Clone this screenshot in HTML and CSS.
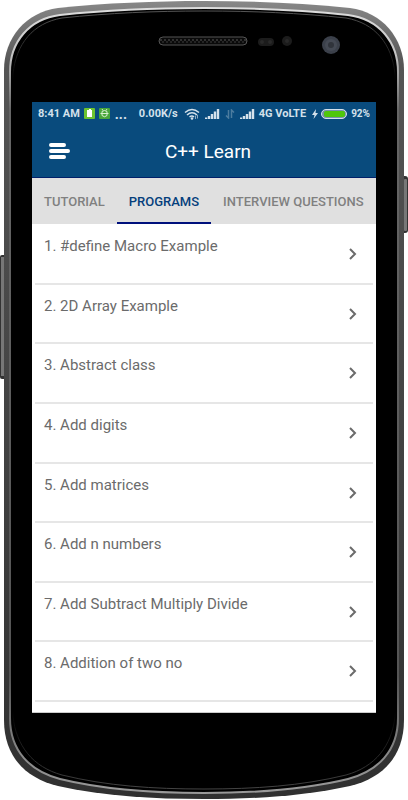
FILE: index.html
```
<!DOCTYPE html>
<html lang="en">
<head>
<meta charset="utf-8">
<meta name="viewport" content="width=device-width, initial-scale=1">
<title>C++ Learn</title>
<link rel="stylesheet" href="styles.css">
</head>
<body>
<div class="phone">
  <svg class="frame" viewBox="0 0 408 800" preserveAspectRatio="none" aria-hidden="true">
    <defs>
      <linearGradient id="metal" x1="0" y1="0" x2="0" y2="1">
        <stop offset="0" stop-color="#888"/><stop offset=".08" stop-color="#555"/><stop offset="1" stop-color="#303030"/>
      </linearGradient>
      <linearGradient id="shine" x1="0" y1="0" x2="0" y2="1">
        <stop offset="0" stop-color="#ddd"/><stop offset=".06" stop-color="#c4c4c4"/><stop offset=".13" stop-color="#666"/><stop offset=".85" stop-color="#555"/><stop offset=".95" stop-color="#888"/><stop offset="1" stop-color="#999"/>
      </linearGradient>
      <linearGradient id="rim" x1="0" y1="0" x2="0" y2="1">
        <stop offset="0" stop-color="#555"/><stop offset=".09" stop-color="#000"/><stop offset=".9" stop-color="#000"/><stop offset="1" stop-color="#444"/>
      </linearGradient>
      <pattern id="mesh" width="4" height="6" patternUnits="userSpaceOnUse" y="38">
        <rect width="4" height="6" fill="#0a0a0a"/><circle cx="1" cy="2" r="1" fill="#3c3c3c"/><circle cx="3" cy="4" r="1" fill="#2c2c2c"/>
      </pattern>
    </defs>
    <rect x="0" y="255" width="6" height="124" rx="2" fill="#333"/>
    <rect x="1" y="257" width="3" height="119" fill="#777"/>
    <rect x="401" y="176" width="7" height="57" rx="3" fill="#333"/>
    <rect x="404" y="179" width="3" height="52" rx="1" fill="#777"/>
    <path fill="url(#metal)" d="M4 70C4 38 26 12 58 8C105 3 155 1 204 1S303 3 350 8C382 12 404 38 404 70V720C404 756 383 778 350 786C305 796 255 799 204 799S103 796 58 786C25 778 4 756 4 720Z"/>
    <path fill="#000" stroke="url(#shine)" stroke-width="2" d="M10 72C10 42 29 19 60 15C107 10 155 8 204 8S301 10 348 15C379 19 398 42 398 72V718C398 751 378 771 348 779C303 790 255 793 204 793S105 790 60 779C30 771 10 751 10 718Z"/>
    <path fill="none" stroke="url(#rim)" d="M13 74C16 44 33 23 62 18C109 13 155 11 204 11S299 13 346 18C375 23 392 44 395 74V716C392 746 375 767 346 775C301 786 255 789 204 789S107 786 62 775C33 767 16 746 13 716Z"/>
    <rect x="159" y="37" width="88" height="8" rx="4" fill="url(#mesh)" stroke="#555"/>
    <rect x="258" y="38" width="16" height="8" rx="4" fill="#1c1c1c"/>
    <circle cx="262" cy="42" r="2" fill="#292929"/><circle cx="270" cy="42" r="2" fill="#292929"/>
    <circle cx="287" cy="41" r="5" fill="#1c1c1c"/><circle cx="287" cy="41" r="2" fill="#292929"/>
    <circle cx="331" cy="45" r="9" fill="#3b404a"/><circle cx="331" cy="45" r="6" fill="#454a54"/><circle cx="331" cy="45" r="3" fill="#30343b"/>
  </svg>

  <div class="screen">
    <div class="status">
      <span>8:41 AM</span>
      <svg class="app-icon" viewBox="0 0 11 11" aria-hidden="true"><rect width="11" height="11" rx="1" fill="#6cc32f"/><path d="M4 2h1V1h2v1h1v7H3V2z" fill="#fff"/></svg>
      <svg class="app-icon" viewBox="0 0 11 11" aria-hidden="true"><rect width="11" height="11" rx="1" fill="#48a63a"/><path d="M1.500 5.500h8M3 5V3.500Q5.500 1.500 8 3.500V5M3 6v1.500Q5.500 10 8 7.500V6M3 1l1 1.500M8 1l-1 1.500" fill="none" stroke="#d8f0d0"/></svg>
      <span class="more">...</span>
      <span class="speed">0.00K/s</span>
      <svg class="wifi" viewBox="0 0 16 12" aria-hidden="true"><path d="M1 4.500Q8-1.500 15 4.500M3 7Q8 2.500 13 7M5.500 9Q8 7 10 9" fill="none" stroke="#d4e1eb" stroke-width="1.500"/><circle cx="8" cy="10.500" r="1.300" fill="#d4e1eb"/><path d="M11.500 11V7.500M13.500 7v3.500" stroke="#8daac2"/></svg>
      <svg class="signal" viewBox="0 0 15 11" aria-hidden="true"><path d="M1 11V9.500M4 11V8M7 11V6M10 11V3.500M13 11V1" stroke="#d4e1eb" stroke-width="2.400"/></svg>
      <svg class="data" viewBox="0 0 10 10" aria-hidden="true"><path d="M3.500 1v8L1 6.500M6.500 9V1L9 3.500" fill="none" stroke="#4c7c9f" stroke-width="1.500"/></svg>
      <svg class="signal" viewBox="0 0 15 11" aria-hidden="true"><path d="M1 11V9.500M4 11V8M7 11V6M10 11V3.500M13 11V1" stroke="#d4e1eb" stroke-width="2.400"/></svg>
      <span class="network">4G VoLTE</span>
      <svg class="bolt" viewBox="0 0 6 10" aria-hidden="true"><path d="M4 0L0 6h2.500L1.500 10L6 4H3.500z" fill="#d4e1eb"/></svg>
      <svg class="battery" viewBox="0 0 26 10" aria-hidden="true"><rect x=".5" y=".5" width="25" height="9" rx="4.500" fill="#7892ad" stroke="#d4e1eb"/><rect x="3" y="2" width="21" height="6" rx="2" fill="#4fc70b"/></svg>
      <span class="percent">92%</span>
    </div>
    <header class="bar">
      <button class="menu" type="button" aria-label="Menu"><svg viewBox="0 0 22 18" aria-hidden="true"><path d="M3 3h13M3 9h17M3 15h13" stroke="#fff" stroke-width="4" stroke-linecap="round"/></svg></button>
      <h1>C++ Learn</h1>
    </header>
    <nav class="tabs">
      <a href="#tutorial">TUTORIAL</a>
      <a class="active" href="#programs" aria-current="page">PROGRAMS</a>
      <a href="#interview">INTERVIEW QUESTIONS</a>
    </nav>
    <ul class="list">
      <li><a href="#p1">1. #define Macro Example<svg viewBox="0 0 8 12" aria-hidden="true"><path d="M1 1l5 5-5 5"/></svg></a></li>
      <li><a href="#p2">2. 2D Array Example<svg viewBox="0 0 8 12" aria-hidden="true"><path d="M1 1l5 5-5 5"/></svg></a></li>
      <li><a href="#p3">3. Abstract class<svg viewBox="0 0 8 12" aria-hidden="true"><path d="M1 1l5 5-5 5"/></svg></a></li>
      <li><a href="#p4">4. Add digits<svg viewBox="0 0 8 12" aria-hidden="true"><path d="M1 1l5 5-5 5"/></svg></a></li>
      <li><a href="#p5">5. Add matrices<svg viewBox="0 0 8 12" aria-hidden="true"><path d="M1 1l5 5-5 5"/></svg></a></li>
      <li><a href="#p6">6. Add n numbers<svg viewBox="0 0 8 12" aria-hidden="true"><path d="M1 1l5 5-5 5"/></svg></a></li>
      <li><a href="#p7">7. Add Subtract Multiply Divide<svg viewBox="0 0 8 12" aria-hidden="true"><path d="M1 1l5 5-5 5"/></svg></a></li>
      <li><a href="#p8">8. Addition of two no<svg viewBox="0 0 8 12" aria-hidden="true"><path d="M1 1l5 5-5 5"/></svg></a></li>
    </ul>
  </div>
</div>
</body>
</html>
```
FILE: styles.css
```
* { box-sizing: border-box; }
body { margin: 0; background: #fff; font-family: Roboto, sans-serif; }
a { color: inherit; text-decoration: none; }
svg { display: block; flex: none; }

.phone {
  position: relative;
  display: flex;
  flex-direction: column;
  min-height: 100vh;
  padding: 102px 32px 87px;
}
.frame { position: absolute; inset: 0; width: 100%; height: 100%; }
.screen {
  position: relative;
  flex: 1;
  display: flex;
  flex-direction: column;
  background: #fff;
}

.status {
  display: flex;
  align-items: center;
  height: 23px;
  padding: 0 6px;
  background: #094b7d;
  color: #d4e1eb;
  font-size: 11px;
  font-weight: 700;
  white-space: nowrap;
}
.app-icon { width: 11px; height: 11px; margin-left: 4px; }
.more { margin-left: 5px; font-size: 14px; }
.speed { margin-left: auto; }
.wifi { width: 16px; height: 12px; margin-left: 6px; }
.signal { width: 15px; height: 11px; margin-left: 5px; }
.data { width: 10px; height: 10px; margin-left: 5px; }
.network { margin-left: 4px; }
.bolt { width: 6px; height: 10px; margin-left: 6px; }
.battery { width: 26px; height: 10px; margin-left: 3px; }
.percent { margin-left: 4px; font-size: 10px; }

.bar {
  display: grid;
  grid-template-columns: 48px 1fr 40px;
  align-items: center;
  height: 53px;
  background: #094b7d;
  border-bottom: 1px solid #00206a;
  color: #fff;
}
.menu { padding: 0 0 0 16px; border: 0; background: none; }
.menu svg { width: 22px; height: 18px; }
.bar h1 { margin: 0; font-size: 19px; font-weight: 400; text-align: center; }

.tabs {
  display: flex;
  height: 46px;
  background: #e0e0e0;
  color: #808080;
  font-size: 13px;
  font-weight: 500;
  line-height: 48px;
  white-space: nowrap;
}
.tabs a { padding: 0 12px; }
.tabs .active { color: #053f7c; border-bottom: 2px solid #00107c; }

.list {
  flex: 1;
  display: grid;
  grid-auto-rows: 1fr;
  margin: 0;
  padding: 1px 3px 10px;
  border-bottom: 1px solid #ccc;
  list-style: none;
  color: #6b6b6b;
  font-size: 15px;
}
.list li { border-bottom: 2px solid #e6e6e6; }
.list a {
  display: flex;
  align-items: flex-start;
  justify-content: space-between;
  height: 100%;
  padding: 11px 16px 0 9px;
  line-height: 20px;
}
.list svg { width: 8px; height: 12px; margin-top: 12px; }
.list path { fill: none; stroke: #6b6b6b; stroke-width: 2; }
```
